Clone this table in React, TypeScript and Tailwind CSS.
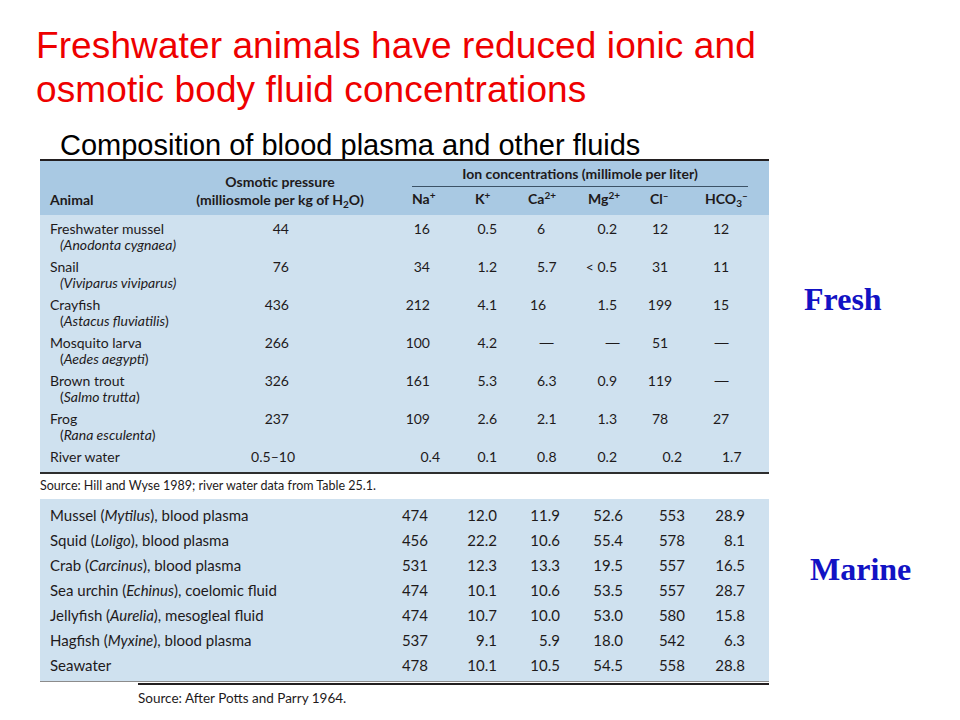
import React from "react"

type FreshRow = {
  name: string
  sci?: React.ReactNode
  osm: string
  osmCls?: string
  vals: React.ReactNode[]
  cls?: (string | null)[]
}

const dash = <span className="inline-block scale-x-[1.5]">—</span>

const freshCols = [
  "w-[55px] text-right pr-[15px]",
  "w-[60px] text-right pr-[8px]",
  "w-[65px] text-left pl-[32px]",
  "w-[60px] text-right pr-[13px]",
  "w-[60px] text-center",
  "w-[79px] text-left pl-[23px]",
]

const marineCols = [
  "w-[55px] text-right pr-[17px]",
  "w-[60px] text-right pr-[8px]",
  "w-[65px] text-right pr-[10px]",
  "w-[60px] text-right pr-[7px]",
  "w-[60px] text-right pr-[5px]",
  "w-[79px] text-right pr-[24px]",
]

const fresh: FreshRow[] = [
  { name: "Freshwater mussel", sci: <i>(Anodonta cygnaea)</i>, osm: "44", vals: ["16", "0.5", "6", "0.2", "12", "12"] },
  { name: "Snail", sci: <i>(Viviparus viviparus)</i>, osm: "76", vals: ["34", "1.2", "5.7", "< 0.5", "31", "11"] },
  {
    name: "Crayfish",
    sci: <>(<i>Astacus fluviatilis</i>)</>,
    osm: "436",
    vals: ["212", "4.1", "16", "1.5", "199", "15"],
    cls: [null, null, "w-[65px] text-left pl-[25px]", null, null, null],
  },
  {
    name: "Mosquito larva",
    sci: <>(<i>Aedes aegypti</i>)</>,
    osm: "266",
    vals: ["100", "4.2", dash, dash, "51", dash],
    cls: [null, null, "w-[65px] text-left pl-[36px]", "w-[60px] text-right pr-[12px]", null, "w-[79px] text-left pl-[26px]"],
  },
  {
    name: "Brown trout",
    sci: <>(<i>Salmo trutta</i>)</>,
    osm: "326",
    vals: ["161", "5.3", "6.3", "0.9", "119", dash],
    cls: [null, null, null, null, null, "w-[79px] text-left pl-[26px]"],
  },
  { name: "Frog", sci: <>(<i>Rana esculenta</i>)</>, osm: "237", vals: ["109", "2.6", "2.1", "1.3", "78", "27"] },
  {
    name: "River water",
    osm: "0.5–10",
    osmCls: "pr-[5px]",
    vals: ["0.4", "0.1", "0.8", "0.2", "0.2", "1.7"],
    cls: ["w-[55px] text-right pr-[5px]", null, null, null, "w-[60px] text-right pr-[8px]", "w-[79px] text-left pl-[32px]"],
  },
]

const marine: { label: React.ReactNode; vals: string[] }[] = [
  { label: <>Mussel (<i>Mytilus</i>), blood plasma</>, vals: ["474", "12.0", "11.9", "52.6", "553", "28.9"] },
  { label: <>Squid (<i>Loligo</i>), blood plasma</>, vals: ["456", "22.2", "10.6", "55.4", "578", "8.1"] },
  { label: <>Crab (<i>Carcinus</i>), blood plasma</>, vals: ["531", "12.3", "13.3", "19.5", "557", "16.5"] },
  { label: <>Sea urchin (<i>Echinus</i>), coelomic fluid</>, vals: ["474", "10.1", "10.6", "53.5", "557", "28.7"] },
  { label: <>Jellyfish (<i>Aurelia</i>), mesogleal fluid</>, vals: ["474", "10.7", "10.0", "53.0", "580", "15.8"] },
  { label: <>Hagfish (<i>Myxine</i>), blood plasma</>, vals: ["537", "9.1", "5.9", "18.0", "542", "6.3"] },
  { label: <>Seawater</>, vals: ["478", "10.1", "10.5", "54.5", "558", "28.8"] },
]

const ionHeads: { node: React.ReactNode; cls: string }[] = [
  { node: <>Na<sup className="text-[10px]">+</sup></>, cls: "w-[55px] pl-[22px]" },
  { node: <>K<sup className="text-[10px]">+</sup></>, cls: "w-[60px] pl-[30px]" },
  { node: <>Ca<sup className="text-[10px]">2+</sup></>, cls: "w-[65px] pl-[23px]" },
  { node: <>Mg<sup className="text-[10px]">2+</sup></>, cls: "w-[60px] pl-[18px]" },
  { node: <>Cl<sup className="text-[10px]">–</sup></>, cls: "w-[60px] pl-[20px]" },
  { node: <>HCO<sub className="text-[10px]">3</sub><sup className="text-[10px]">–</sup></>, cls: "w-[79px] pl-[15px]" },
]

export default function App() {
  return (
    <div className="w-[960px] h-[720px] bg-white overflow-hidden font-['Liberation_Sans',Arial,sans-serif]">
      <h1 className="pl-[36px] pt-[24px] text-[37px] leading-[44px] text-[#ee0000] tracking-[0.1px]">
        Freshwater animals have reduced ionic and
        <br />
        osmotic body fluid concentrations
      </h1>
      <div className="pl-[60px] mt-[20px] h-[27px] text-[29px] leading-[27px] text-black">
        Composition of blood plasma and other fluids
      </div>

      <div className="flex">
        <div className="ml-[40px] w-[729px] font-['Lato',sans-serif] text-[14px] leading-[16px] text-[#1e1a1b]">
          {/* freshwater table */}
          <div className="border-t-2 border-[#231f20]">
            <div className="flex h-[54px] bg-[#a9c9e3] font-bold">
              <div className="w-[130px] pl-[10px] pt-[31px]">Animal</div>
              <div className="w-[220px] pt-[12px] text-center leading-[18px]">
                <div>Osmotic pressure</div>
                <div>
                  (milliosmole per kg of H<sub className="text-[10px]">2</sub>O)
                </div>
              </div>
              <div className="w-[379px] pt-[5px]">
                <div className="ml-[22px] w-[336px] text-center">Ion concentrations (millimole per liter)</div>
                <div className="ml-[22px] w-[336px] h-[1px] mt-[4px] bg-[#3c5266]" />
                <div className="flex mt-[4px]">
                  {ionHeads.map((h, i) => (
                    <div key={i} className={h.cls}>
                      {h.node}
                    </div>
                  ))}
                </div>
              </div>
            </div>
            <div className="bg-[#cfe1ef] border-b-2 border-[#2e2e2e]">
              {fresh.map((r, i) => (
                <div key={i} className={i === fresh.length - 1 ? "flex h-[29px] pt-[6px]" : "flex h-[38px] pt-[6px]"}>
                  <div className="w-[160px] pl-[10px]">
                    <div>{r.name}</div>
                    {r.sci && <div className="pl-[10px]">{r.sci}</div>}
                  </div>
                  <div className={`w-[100px] text-right ${r.osmCls ?? "pr-[11px]"}`}>{r.osm}</div>
                  <div className="w-[90px]" />
                  {r.vals.map((v, j) => (
                    <div key={j} className={r.cls?.[j] ?? freshCols[j]}>
                      {v}
                    </div>
                  ))}
                </div>
              ))}
            </div>
          </div>
          <div className="mt-[4px] text-[12.5px] leading-[16px]">
            Source: Hill and Wyse 1989; river water data from Table 25.1.
          </div>

          {/* marine table */}
          <div className="mt-[5px] bg-[#cfe1ef] pt-[3px] pb-[4px] border-b border-[#8c8c8c]">
            {marine.map((r, i) => (
              <div key={i} className="flex h-[25px] items-center text-[15px]">
                <div className="w-[350px] pl-[10px]">{r.label}</div>
                {r.vals.map((v, j) => (
                  <div key={j} className={marineCols[j]}>
                    {v}
                  </div>
                ))}
              </div>
            ))}
          </div>
          <div className="ml-[98px] mt-[1px] h-[2px] bg-[#231f20]" />
          <div className="ml-[98px] mt-[5px] text-[13.5px] leading-[16px]">Source: After Potts and Parry 1964.</div>
        </div>

        <div className="flex-1 font-['Liberation_Serif',serif] font-bold text-[32px] leading-[32px] text-[#1212c4]">
          <div className="pl-[35px] mt-[124px]">Fresh</div>
          <div className="pl-[41px] mt-[238px]">Marine</div>
        </div>
      </div>
    </div>
  )
}
